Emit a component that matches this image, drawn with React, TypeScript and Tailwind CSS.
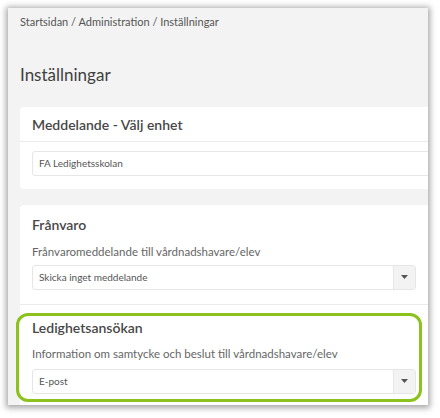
const font = { fontFamily: "Lato, 'Open Sans', sans-serif" }

function Caret() {
  return (
    <svg width="7" height="4" viewBox="0 0 7 4">
      <path d="M0 0 H7 L3.5 4 Z" fill="#555" />
    </svg>
  )
}

function SelectBox({ value }: { value: string }) {
  return (
    <div className="flex h-[25px] w-[384px] rounded-[3px] border border-[#e6e6e6] bg-white">
      <div className="flex flex-1 items-center pl-[6px] text-[10px] text-[#555]">{value}</div>
      <div className="flex w-[22px] items-center justify-center border-l border-[#e6e6e6] bg-[#f3f3f3]">
        <Caret />
      </div>
    </div>
  )
}

export default function App() {
  return (
    <div className="h-[418px] w-[440px] bg-white pl-2 pt-2" style={font}>
      <div className="relative h-[397px] w-[420px] overflow-hidden bg-[#f3f3f3] pl-3 shadow-[0_1px_6px_2px_rgba(0,0,0,0.35)]">
        <div className="pt-[6px] text-[11px] text-[#555]">Startsidan / Administration / Inställningar</div>
        <h1 className="mt-[33px] text-[17px] leading-[22px] text-[#3f3f3f]">Inställningar</h1>

        <div className="mt-[21px] w-[420px] rounded-[4px] bg-white">
          <div className="border-b border-[#ececec] px-3 pt-[8px] pb-[7px] text-[14px] leading-[19px] font-semibold text-[#474747]">
            Meddelande - Välj enhet
          </div>
          <div className="px-3 pt-[9px] pb-[13px]">
            <div className="flex h-[25px] w-[400px] items-center rounded-[3px] border border-[#e6e6e6] pl-[6px] text-[10px] text-[#555]">
              FA Ledighetsskolan
            </div>
          </div>
        </div>

        <div className="mt-4 w-[420px] rounded-[4px] bg-white">
          <div className="border-b border-[#ececec] px-3 pt-[10px] pb-[14px]">
            <div className="text-[14px] leading-[19px] font-semibold text-[#474747]">Frånvaro</div>
            <div className="mt-[11px] text-[11.5px] leading-[14px] text-[#666]">Frånvaromeddelande till vårdnadshavare/elev</div>
            <div className="mt-[6px]">
              <SelectBox value="Skicka inget meddelande" />
            </div>
          </div>
          <div className="px-3 pt-[13px] pb-4">
            <div className="text-[14px] leading-[19px] font-semibold text-[#474747]">Ledighetsansökan</div>
            <div className="mt-[10px] text-[11.5px] leading-[14px] text-[#666]">
              Information om samtycke och beslut till vårdnadshavare/elev
            </div>
            <div className="mt-[8px]">
              <SelectBox value="E-post" />
            </div>
          </div>
        </div>

        <div className="pointer-events-none absolute top-[305px] left-2 h-[89px] w-[406px] rounded-[12px] border-[3px] border-[#8cc21e]" />
      </div>
    </div>
  )
}
